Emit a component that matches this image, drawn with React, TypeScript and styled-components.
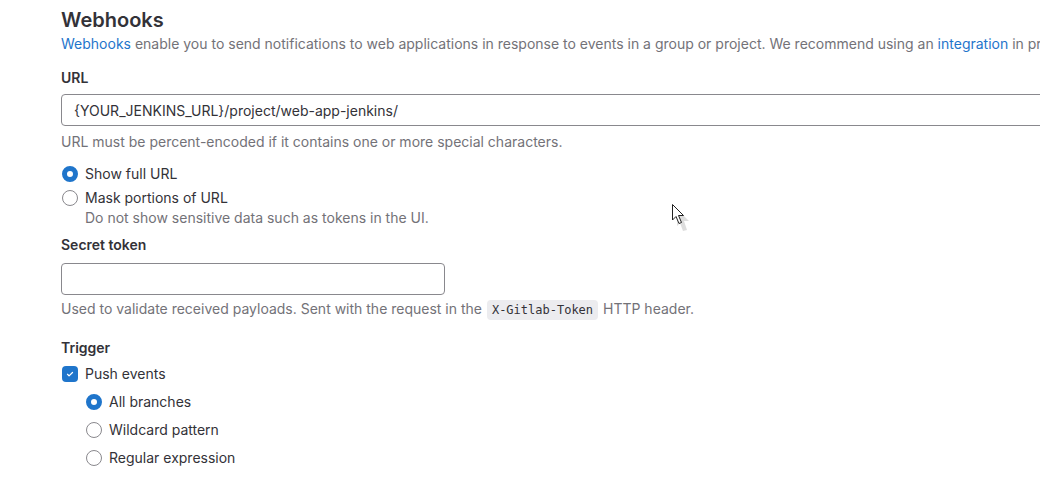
import React from "react";
import styled, { createGlobalStyle } from "styled-components";

const GlobalStyle = createGlobalStyle`
  html, body {
    margin: 0;
    padding: 0;
    background: #ffffff;
    overflow: hidden;
  }
  body {
    font-family: Inter, "Noto Sans", sans-serif;
    color: #333238;
    font-size: 14px;
    -webkit-font-smoothing: antialiased;
  }
`;

const Page = styled.div`
  position: relative;
  width: 1040px;
  height: 483px;
  overflow: hidden;
`;

const Content = styled.div`
  width: 1200px;
  padding: 8px 0 0 61px;
  display: flex;
  flex-direction: column;
`;

const Title = styled.h2`
  margin: 0;
  font-size: 20px;
  line-height: 24px;
  font-weight: 600;
  color: #333238;
`;

const Lead = styled.p`
  margin: 2px 0 0;
  font-size: 14px;
  line-height: 20px;
  color: #737278;
  white-space: nowrap;
`;

const Link = styled.a`
  color: #1f75cb;
  text-decoration: none;
`;

const Label = styled.div<{ $top: number; $bottom: number }>`
  margin-top: ${(p) => p.$top}px;
  margin-bottom: ${(p) => p.$bottom}px;
  font-size: 14px;
  line-height: 20px;
  font-weight: 600;
  color: #333238;
`;

const Input = styled.div<{ $width?: number }>`
  box-sizing: border-box;
  width: ${(p) => (p.$width ? `${p.$width}px` : "1100px")};
  height: 32px;
  border: 1px solid #89888d;
  border-radius: 4px;
  padding: 0 12px;
  display: flex;
  align-items: center;
  font-size: 14px;
  color: #333238;
  background: #fff;
`;

const Help = styled.div<{ $top: number }>`
  margin-top: ${(p) => p.$top}px;
  font-size: 14px;
  line-height: 20px;
  color: #737278;
  white-space: nowrap;
`;

const Code = styled.code`
  font-family: "DejaVu Sans Mono", "Liberation Mono", monospace;
  font-size: 12px;
  background: #ececef;
  color: #333238;
  border-radius: 4px;
  padding: 3px 5px;
  margin: 0 1px;
`;

const OptionList = styled.div<{ $top: number; $gap: number; $indent?: number }>`
  margin-top: ${(p) => p.$top}px;
  margin-left: ${(p) => p.$indent ?? 0}px;
  display: flex;
  flex-direction: column;
  gap: ${(p) => p.$gap}px;
`;

const Option = styled.div`
  display: grid;
  grid-template-columns: 16px auto;
  column-gap: 8px;
  align-items: center;
  font-size: 14px;
  line-height: 20px;
  color: #333238;
`;

const OptionHelp = styled.div`
  grid-column: 2;
  color: #737278;
  line-height: 20px;
`;

const Radio = styled.span<{ $checked?: boolean }>`
  box-sizing: border-box;
  width: 16px;
  height: 16px;
  border-radius: 50%;
  border: ${(p) => (p.$checked ? "5px solid #1f75cb" : "1px solid #89888d")};
  background: #fff;
  margin-left: 1px;
`;

const Checkbox = styled.span`
  box-sizing: border-box;
  width: 16px;
  height: 16px;
  border-radius: 4px;
  background: #1f75cb;
  display: flex;
  align-items: center;
  justify-content: center;
  margin-left: 1px;
`;

const Cursor = styled.svg`
  position: absolute;
  left: 671px;
  top: 203px;
`;

export default function App() {
  return (
    <Page>
      <GlobalStyle />
      <Content>
        <Title>Webhooks</Title>
        <Lead>
          <Link>Webhooks</Link> enable you to send notifications to web applications in response to
          events in a group or project. We recommend using an <Link>integration</Link> in preference
          to a webhook.
        </Lead>

        <Label $top={14} $bottom={6}>URL</Label>
        <Input>{"{YOUR_JENKINS_URL}/project/web-app-jenkins/"}</Input>
        <Help $top={6}>URL must be percent-encoded if it contains one or more special characters.</Help>

        <OptionList $top={12} $gap={4}>
          <Option>
            <Radio $checked />
            <span>Show full URL</span>
          </Option>
          <Option>
            <Radio />
            <span>Mask portions of URL</span>
            <OptionHelp>Do not show sensitive data such as tokens in the UI.</OptionHelp>
          </Option>
        </OptionList>

        <Label $top={7} $bottom={8}>Secret token</Label>
        <Input $width={384} />
        <Help $top={4}>
          Used to validate received payloads. Sent with the request in the{" "}
          <Code>X-Gitlab-Token</Code> HTTP header.
        </Help>

        <Label $top={18} $bottom={6}>Trigger</Label>
        <Option>
          <Checkbox>
            <svg width="10" height="10" viewBox="0 0 16 16">
              <path
                d="M4 8.5l2.5 2.5L12 5.5"
                fill="none"
                stroke="#fff"
                strokeWidth="2"
                strokeLinecap="round"
                strokeLinejoin="round"
              />
            </svg>
          </Checkbox>
          <span>Push events</span>
        </Option>
        <OptionList $top={8} $gap={8} $indent={24}>
          <Option>
            <Radio $checked />
            <span>All branches</span>
          </Option>
          <Option>
            <Radio />
            <span>Wildcard pattern</span>
          </Option>
          <Option>
            <Radio />
            <span>Regular expression</span>
          </Option>
        </OptionList>
      </Content>
      <Cursor width="28" height="32" viewBox="0 0 28 32">
        <path d="M6 6 L18 18 L13 18 L16 27 L12 28 L9 20 L6 23 Z" fill="#d4d4d4" opacity="0.8" />
        <path
          d="M1.5 1.5 L1.5 17 L5 13.5 L8 20.5 L10.5 19.5 L7.5 12.5 L12.5 12.5 Z"
          fill="#fff"
          stroke="#222"
          strokeWidth="1"
          strokeLinejoin="miter"
        />
      </Cursor>
    </Page>
  );
}
